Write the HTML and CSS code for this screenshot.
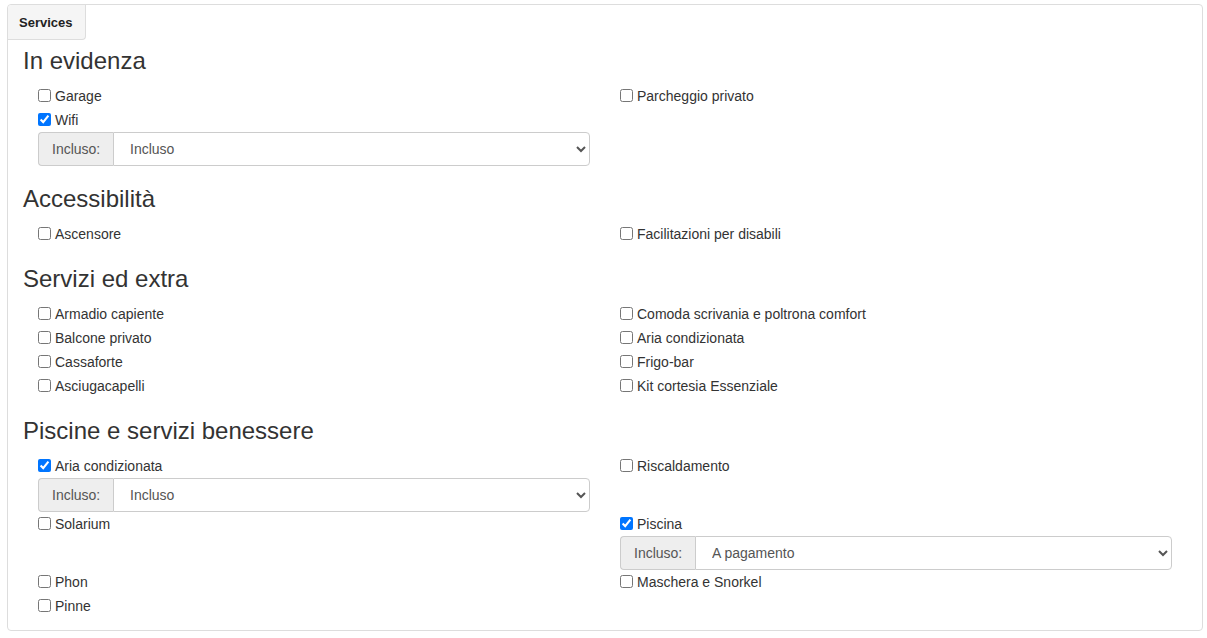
FILE: index.html
```html
<!doctype html>
<html lang="it">
  <head>
    <meta charset="UTF-8" />
    <title>Servizi struttura</title>
    <link rel="stylesheet" href="styles.css">
  </head>
  <body>
    <div class="panel">
      <div class="panel-tab">Services</div>
      <div class="panel-body">
        <h3 class="group-title">In evidenza</h3>
        <div class="service-grid">
          <div class="service">
            <label><input type="checkbox" />Garage</label>
          </div>
          <div class="service">
            <label><input type="checkbox" />Parcheggio privato</label>
          </div>
          <div class="service">
            <label><input type="checkbox" checked />Wifi</label>
            <div class="input-group">
              <span class="addon">Incluso:</span>
              <select class="form-select">
                <option selected>Incluso</option>
                <option>A pagamento</option>
              </select>
            </div>
          </div>
        </div>

        <h3 class="group-title">Accessibilità</h3>
        <div class="service-grid">
          <div class="service">
            <label><input type="checkbox" />Ascensore</label>
          </div>
          <div class="service">
            <label><input type="checkbox" />Facilitazioni per disabili</label>
          </div>
        </div>

        <h3 class="group-title">Servizi ed extra</h3>
        <div class="service-grid">
          <div class="service"><label><input type="checkbox" />Armadio capiente</label></div>
          <div class="service"><label><input type="checkbox" />Comoda scrivania e poltrona comfort</label></div>
          <div class="service"><label><input type="checkbox" />Balcone privato</label></div>
          <div class="service"><label><input type="checkbox" />Aria condizionata</label></div>
          <div class="service"><label><input type="checkbox" />Cassaforte</label></div>
          <div class="service"><label><input type="checkbox" />Frigo-bar</label></div>
          <div class="service"><label><input type="checkbox" />Asciugacapelli</label></div>
          <div class="service"><label><input type="checkbox" />Kit cortesia Essenziale</label></div>
        </div>

        <h3 class="group-title">Piscine e servizi benessere</h3>
        <div class="service-grid">
          <div class="service">
            <label><input type="checkbox" checked />Aria condizionata</label>
            <div class="input-group">
              <span class="addon">Incluso:</span>
              <select class="form-select">
                <option selected>Incluso</option>
                <option>A pagamento</option>
              </select>
            </div>
          </div>
          <div class="service">
            <label><input type="checkbox" />Riscaldamento</label>
          </div>
          <div class="service">
            <label><input type="checkbox" />Solarium</label>
          </div>
          <div class="service">
            <label><input type="checkbox" checked />Piscina</label>
            <div class="input-group">
              <span class="addon">Incluso:</span>
              <select class="form-select">
                <option>Incluso</option>
                <option selected>A pagamento</option>
              </select>
            </div>
          </div>
          <div class="service"><label><input type="checkbox" />Phon</label></div>
          <div class="service"><label><input type="checkbox" />Maschera e Snorkel</label></div>
          <div class="service"><label><input type="checkbox" />Pinne</label></div>
        </div>
      </div>
    </div>
  </body>
</html>
```

FILE: styles.css
```css
* {
  margin: 0;
  padding: 0;
  box-sizing: border-box;
}

body {
  font-family: 'Liberation Sans', Arial, sans-serif;
  font-size: 14px;
  color: #333;
  background: #fff;
  padding: 4px 4px 0 7px;
}

.panel {
  border: 1px solid #ddd;
  border-radius: 4px;
  height: 627px;
}

.panel-tab {
  display: inline-block;
  height: 35px;
  line-height: 36px;
  padding: 0 12px 0 11px;
  background: #f5f5f5;
  border-right: 1px solid #ddd;
  border-bottom: 1px solid #ddd;
  border-radius: 4px 0 4px 0;
  font-size: 13px;
  font-weight: bold;
  color: #222;
}

.panel-body {
  padding: 8px 15px 0 15px;
}

.group-title {
  font-size: 24px;
  font-weight: normal;
  line-height: 26px;
  color: #333;
  margin-top: 20px;
  margin-bottom: 10px;
}

.group-title:first-child {
  margin-top: 0;
}

.service-grid {
  display: grid;
  grid-template-columns: 1fr 1fr;
  width: 1164px;
}

.service {
  padding: 0 15px;
}

.service label {
  display: flex;
  align-items: center;
  height: 24px;
  line-height: 20px;
  cursor: pointer;
}

.service input[type="checkbox"] {
  width: 13px;
  height: 13px;
  margin: 0 4px 2px 0;
}

.input-group {
  display: flex;
  height: 34px;
}

.addon {
  display: flex;
  align-items: center;
  width: 75px;
  padding: 0 13px;
  background: #eee;
  border: 1px solid #ccc;
  border-right: none;
  border-radius: 4px 0 0 4px;
  color: #555;
}

.form-select {
  flex: 1;
  height: 34px;
  padding: 0 12px;
  border: 1px solid #ccc;
  border-radius: 0 4px 4px 0;
  background: #fff;
  font-family: inherit;
  font-size: 14px;
  color: #555;
}
```
